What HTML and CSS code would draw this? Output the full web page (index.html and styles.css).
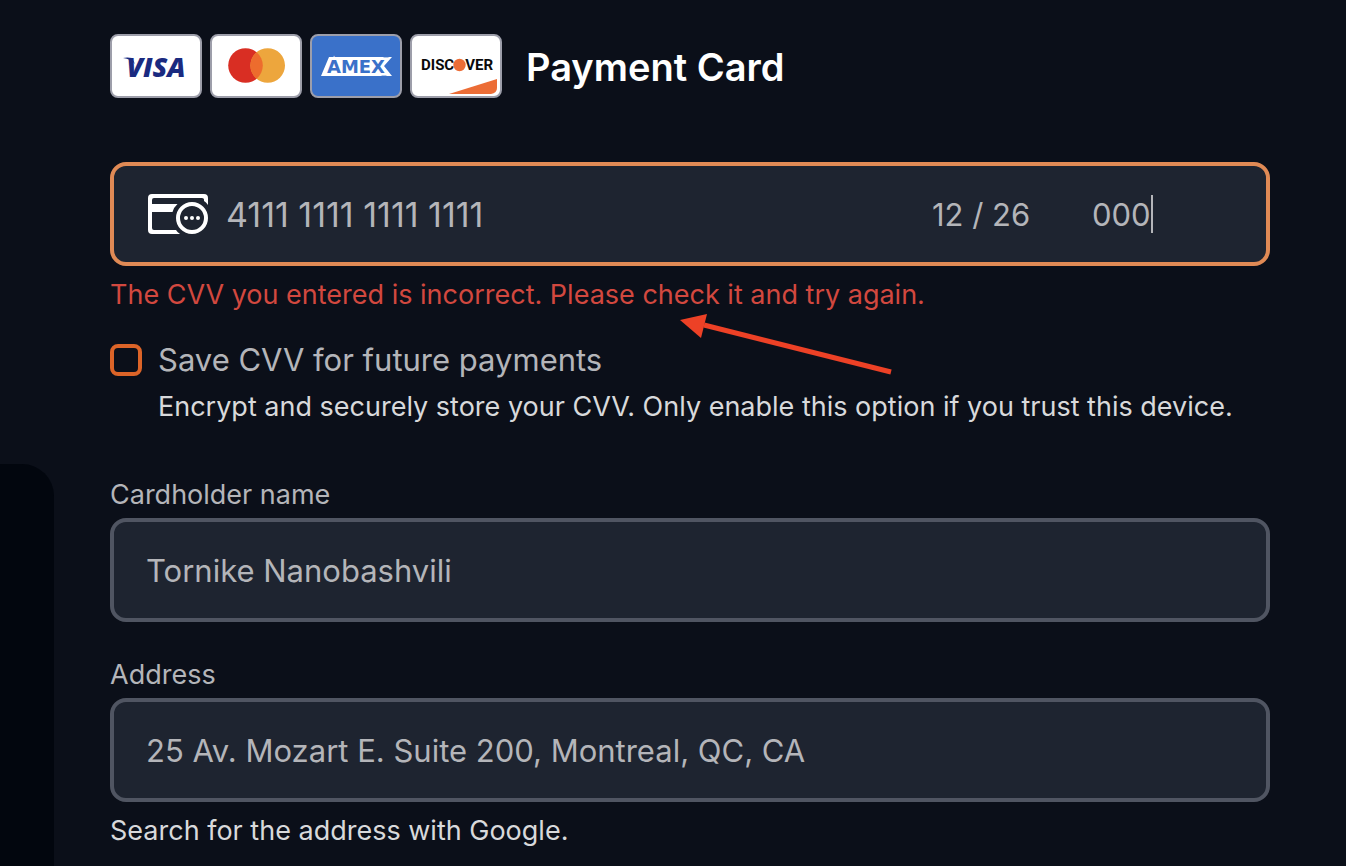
FILE: index.html
```html
<!DOCTYPE html>
<html lang="en">
<head>
<meta charset="utf-8">
<meta name="viewport" content="width=device-width, initial-scale=1">
<title>Payment Card</title>
<link rel="stylesheet" href="styles.css">
</head>
<body>
<div class="page">
  <aside class="side-panel" aria-hidden="true"></aside>
  <main class="payment">
    <header class="heading">
      <div class="brands">
        <svg class="brand" viewBox="0 0 92 64" role="img" aria-label="Visa">
          <rect class="plate" x="1" y="1" width="90" height="62" rx="7"/>
          <path fill="#1a2a80" d="M13 24q4-1 9 0l3 6q-4-5-12-6z"/>
          <text class="visa" x="46" y="43" text-anchor="middle">VISA</text>
        </svg>
        <svg class="brand" viewBox="0 0 92 64" role="img" aria-label="Mastercard">
          <rect class="plate" x="1" y="1" width="90" height="62" rx="7"/>
          <circle cx="35.500" cy="31.500" r="17.300" fill="#d92e23"/>
          <circle cx="57.700" cy="31.500" r="17.300" fill="#eda63d"/>
          <path fill="#ed6c2d" d="M46.600 18.230a17.300 17.300 0 0 1 0 26.540a17.300 17.300 0 0 1 0-26.540z"/>
        </svg>
        <svg class="brand" viewBox="0 0 92 64" role="img" aria-label="American Express">
          <rect class="plate plate-blue" x="1" y="1" width="90" height="62" rx="7"/>
          <path fill="#fff" d="M19 23h54l3 3 3-3h3l-8 9 8 10h-5l-3-3-3 3H11z"/>
          <text class="amex" x="46" y="39" text-anchor="middle">AMEX</text>
        </svg>
        <svg class="brand" viewBox="0 0 92 64" role="img" aria-label="Discover">
          <rect class="plate" x="1" y="1" width="90" height="62" rx="7"/>
          <path fill="#ec6d36" d="M39 60L87 45v9q0 5-6 6z"/>
          <text class="discover" x="11" y="36">DISC</text>
          <circle cx="49.500" cy="31" r="6.200" fill="#ec6d36"/>
          <text class="discover" x="83" y="36" text-anchor="end">VER</text>
        </svg>
      </div>
      <h1 class="title">Payment Card</h1>
    </header>

    <form class="form">
      <div class="card-block">
        <div class="field card-field">
          <svg class="card-icon" viewBox="0 0 60 40" aria-hidden="true">
            <path fill="#fff" d="M4 0H56Q60 0 60 4V11Q58 8 56 7V5.500Q56 4 54 4H6Q4 4 4 6V10H29.500Q26 13 24.500 18H4V34Q4 36 6 36H28Q29.500 38.500 32 40H4Q0 40 0 36V4Q0 0 4 0z"/>
            <circle cx="44" cy="24" r="14" fill="none" stroke="#fff" stroke-width="4"/>
            <g fill="#fff"><circle cx="38" cy="24" r="2"/><circle cx="44" cy="24" r="2"/><circle cx="50" cy="24" r="2"/></g>
          </svg>
          <input class="entry number" type="text" aria-label="Card number" value="4111 1111 1111 1111">
          <input class="entry expiry" type="text" aria-label="Expiry date" value="12 / 26">
          <div class="cvv-cell">
            <input class="entry cvv" type="text" aria-label="CVV" aria-describedby="cvv-error" value="000">
            <span class="caret"></span>
          </div>
        </div>
        <p class="error" id="cvv-error">The CVV you entered is incorrect. Please check it and try again.</p>
        <svg class="arrow" viewBox="0 0 212 64" aria-hidden="true">
          <path d="M24 11L211 58" stroke="#ed4126" stroke-width="5" fill="none"/>
          <path d="M0 6L27 0 21 24z" fill="#ed4126"/>
        </svg>
      </div>

      <div class="save">
        <input class="tick" type="checkbox" id="save-cvv" aria-describedby="save-hint">
        <div class="save-text">
          <label class="save-label" for="save-cvv">Save CVV for future payments</label>
          <p class="hint" id="save-hint">Encrypt and securely store your CVV. Only enable this option if you trust this device.</p>
        </div>
      </div>

      <div class="group">
        <label class="label" for="holder">Cardholder name</label>
        <input class="field entry" type="text" id="holder" value="Tornike Nanobashvili">
      </div>

      <div class="group">
        <label class="label" for="address">Address</label>
        <input class="field entry" type="text" id="address" aria-describedby="address-hint" value="25 Av. Mozart E. Suite 200, Montreal, QC, CA">
        <p class="hint address-hint" id="address-hint">Search for the address with Google.</p>
      </div>
    </form>
  </main>
</div>
</body>
</html>
```

FILE: styles.css
```css
* { box-sizing: border-box; }

body {
  margin: 0;
  background: #0b0f19;
  color: #b4b5b9;
  font-family: Inter, "Liberation Sans", sans-serif;
}

p, h1 { margin: 0; }

.page {
  display: grid;
  grid-template-columns: 54px minmax(0, 1fr);
  min-height: 100vh;
}

.side-panel {
  margin-top: 464px;
  background: #02060e;
  border-top-right-radius: 32px;
}

.payment { padding: 34px 76px 0 56px; }

.heading {
  display: flex;
  align-items: center;
  gap: 24px;
  margin-bottom: 64px;
}

.brands { display: flex; gap: 8px; }

.brand { display: block; width: 92px; height: 64px; }

.plate { fill: #fff; stroke: #9d9eaa; stroke-width: 2; }
.plate-blue { fill: #3a71c9; }

.visa {
  fill: #1a2a80;
  font: italic 800 27px "Open Sans", sans-serif;
}

.amex {
  fill: #3a71c9;
  stroke: #fff;
  stroke-width: 5px;
  paint-order: stroke;
  font: 700 18px "DejaVu Sans", sans-serif;
}

.discover {
  fill: #0a0a0a;
  font: 700 15px Roboto, sans-serif;
}

.title {
  color: #fff;
  font-size: 38px;
  font-weight: 600;
  line-height: 48px;
  padding-top: 2px;
}

.card-block { position: relative; }

.field {
  display: block;
  width: 100%;
  height: 104px;
  padding: 0 32px;
  border: 4px solid #505562;
  border-radius: 16px;
  background: #1e2430;
}

.entry {
  color: #b4b5b9;
  font-family: inherit;
  font-size: 31px;
  line-height: 40px;
  outline: none;
}

.card-field {
  display: flex;
  align-items: center;
  border-color: #e08a55;
}

.card-field .entry {
  min-width: 0;
  padding: 2px 0 0;
  border: 0;
  background: transparent;
}

.card-icon {
  flex: none;
  width: 60px;
  height: 40px;
  margin: 0 18px 0 2px;
}

.card-field .number {
  flex: 1;
  font-size: 34px;
}

.card-field .expiry { width: 160px; }

.cvv-cell {
  display: flex;
  align-items: center;
  width: 142px;
}

.cvv { field-sizing: content; }

.caret { width: 2px; height: 38px; background: #b4b5b9; }

.error {
  padding-top: 11px;
  color: #d2483f;
  font-size: 27px;
  line-height: 36px;
}

.arrow {
  position: absolute;
  top: 152px;
  left: 570px;
  width: 212px;
  height: 64px;
  pointer-events: none;
}

.save {
  display: flex;
  align-items: flex-start;
  gap: 16px;
  margin-top: 27px;
}

.tick {
  flex: none;
  appearance: none;
  width: 32px;
  height: 32px;
  margin: 4px 0 0;
  border: 4px solid #dc6428;
  border-radius: 8px;
}

.tick:checked { background: #dc6428; }

.save-label {
  display: block;
  font-size: 31px;
  line-height: 40px;
}

.hint {
  color: #d8d9db;
  font-size: 27px;
  line-height: 36px;
}

.save .hint { margin-top: 9px; }

.group { margin-top: 35px; }
.save + .group { margin-top: 52px; }

.label {
  display: block;
  margin-bottom: 5px;
  font-size: 27px;
  line-height: 36px;
}

.address-hint { margin-top: 11px; }
```
